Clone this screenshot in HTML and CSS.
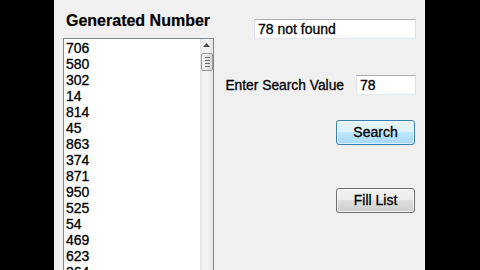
FILE: index.html
```html
<!DOCTYPE html>
<html>
<head>
<meta charset="utf-8">
<link rel="stylesheet" href="styles.css">
</head>
<body>
<div class="screen">
  <div class="bar bar-left"></div>
  <div class="app">
    <div class="left">
      <div class="title">Generated Number</div>
      <div class="listbox">
        <ul class="items">
          <li>706</li>
          <li>580</li>
          <li>302</li>
          <li>14</li>
          <li>814</li>
          <li>45</li>
          <li>863</li>
          <li>374</li>
          <li>871</li>
          <li>950</li>
          <li>525</li>
          <li>54</li>
          <li>469</li>
          <li>623</li>
          <li>364</li>
        </ul>
        <div class="scrollbar">
          <div class="sb-up">
            <svg width="7" height="4" viewBox="0 0 7 4"><path d="M0 4 L3.5 0 L7 4 Z" fill="#4d4d4d"/></svg>
          </div>
          <div class="sb-thumb">
            <span class="grip"></span>
            <span class="grip"></span>
            <span class="grip"></span>
            <span class="grip"></span>
          </div>
          <div class="sb-track"></div>
        </div>
      </div>
    </div>
    <div class="right">
      <div class="textbox wide">78 not found</div>
      <div class="search-row">
        <span class="label">Enter Search Value</span>
        <div class="textbox small">78</div>
      </div>
      <button class="btn btn-search">Search</button>
      <button class="btn btn-fill">Fill List</button>
    </div>
  </div>
  <div class="bar bar-right"></div>
</div>
</body>
</html>
```

FILE: styles.css
```css
html, body {
  margin: 0;
  padding: 0;
  background: #000;
}

.screen {
  display: flex;
  width: 480px;
  height: 270px;
  overflow: hidden;
  background: #000;
  font-family: "Liberation Sans", Arial, sans-serif;
  color: #000;
}

.bar-left {
  width: 54px;
  flex: none;
}

.bar-right {
  flex: 1;
}

.app {
  width: 371px;
  flex: none;
  display: flex;
  box-sizing: border-box;
  padding-left: 9px;
  background: #f0f0f0;
  overflow: hidden;
  -webkit-text-stroke: 0.3px #000;
}

.left {
  width: 151px;
  flex: none;
  display: flex;
  flex-direction: column;
}

.title {
  margin: 12px 0 0 3px;
  font-size: 16px;
  font-weight: bold;
  line-height: 18px;
  white-space: nowrap;
  -webkit-text-stroke: 0.2px #000;
}

.listbox {
  flex: 1;
  margin-top: 8px;
  display: flex;
  background: #fff;
  border: 1px solid #828790;
  border-bottom: none;
  min-height: 0;
  overflow: hidden;
}

.items {
  flex: 1;
  margin: 0;
  padding: 1px 0 0 2px;
  list-style: none;
  font-size: 14px;
  line-height: 16px;
}

.scrollbar {
  width: 13px;
  flex: none;
  display: flex;
  flex-direction: column;
  background: linear-gradient(to right, #e4e4e4 0, #f1f1f1 25%, #f3f3f3 50%, #ececec 80%, #e2e2e2 100%);
}

.sb-up {
  height: 14px;
  display: flex;
  align-items: center;
  justify-content: center;
}

.sb-up svg {
  display: block;
  margin-top: -2px;
}

.sb-thumb {
  height: 18px;
  margin: 0 0 0 1px;
  box-sizing: border-box;
  border: 1px solid #9c9c9c;
  border-radius: 2px;
  background: linear-gradient(to right, #f4f4f4 0, #e8e8e8 50%, #d6d6d6 100%);
  display: flex;
  flex-direction: column;
  align-items: center;
  justify-content: center;
  gap: 2px;
}

.grip {
  display: block;
  width: 5px;
  height: 1px;
  background: #6e6e6e;
}

.sb-track {
  flex: 1;
}

.right {
  flex: 1;
  display: flex;
  flex-direction: column;
  align-items: flex-end;
  padding: 19px 9px 0 0;
}

.textbox {
  box-sizing: border-box;
  height: 20px;
  padding: 1px 3px;
  background: #fff;
  border: 1px solid;
  border-color: #abadb3 #dbdfe6 #e3e9ef #e2e3ea;
  font-size: 14px;
  line-height: 16px;
  white-space: nowrap;
}

.wide {
  width: 162px;
}

.small {
  width: 60px;
}

.search-row {
  margin-top: 36px;
  display: flex;
  align-items: flex-start;
}

.label {
  margin: 3px 12px 0 0;
  font-size: 13.8px;
  line-height: 16px;
  white-space: nowrap;
}

.btn {
  width: 79px;
  height: 25px;
  margin-right: 1px;
  padding: 0 0 2px;
  box-sizing: border-box;
  border-radius: 3px;
  font-family: "Liberation Sans", Arial, sans-serif;
  font-size: 14px;
  line-height: 16px;
  color: #000;
  -webkit-text-stroke: 0.3px #000;
}

.btn-search {
  margin-top: 25px;
  border: 1px solid #3c7fb1;
  background: linear-gradient(to bottom, #eaf6fd 0, #d9f0fc 50%, #bee6fd 50%, #a7d9f5 100%);
  box-shadow: inset 0 0 0 1px rgba(255, 255, 255, 0.6);
}

.btn-fill {
  margin-top: 43px;
  border: 1px solid #707070;
  background: linear-gradient(to bottom, #f2f2f2 0, #ebebeb 50%, #dddddd 50%, #cfcfcf 100%);
  box-shadow: inset 0 0 0 1px rgba(255, 255, 255, 0.7);
}
```
